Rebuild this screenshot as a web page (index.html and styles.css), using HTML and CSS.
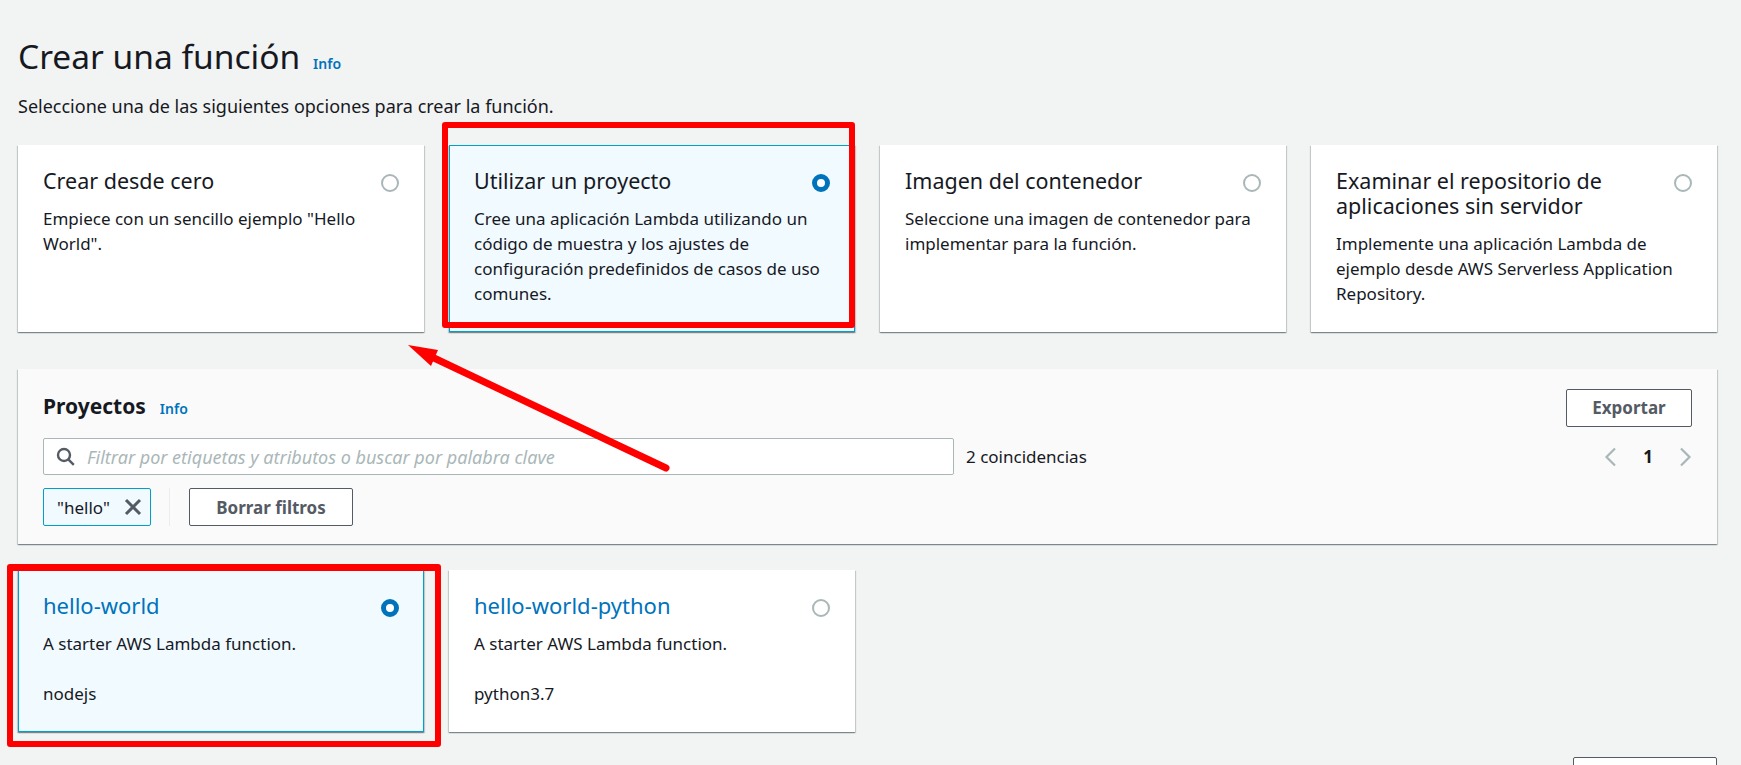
FILE: index.html
```html
<!DOCTYPE html>
<html lang="es">
<head>
    <meta charset="UTF-8">
    <title>Crear una función</title>
    <link rel="stylesheet" href="styles.css">
</head>
<body>
    <div class="pagina">
        <div class="migas">
            <span>Lambda</span><span>/</span><span>Funciones</span><span>/</span><span>Crear una función</span>
        </div>
        <div class="cabecera">
            <h1>Crear una función</h1>
            <a class="info" href="#">Info</a>
        </div>
        <p class="intro">Seleccione una de las siguientes opciones para crear la función.</p>

        <div class="opciones">
            <div class="tarjeta">
                <div class="tarjeta-tit"><h2>Crear desde cero</h2><span class="radio"></span></div>
                <p>Empiece con un sencillo ejemplo "Hello World".</p>
            </div>
            <div class="tarjeta activa">
                <div class="tarjeta-tit"><h2>Utilizar un proyecto</h2><span class="radio"></span></div>
                <p>Cree una aplicación Lambda utilizando un código de muestra y los ajustes de configuración predefinidos de casos de uso comunes.</p>
            </div>
            <div class="tarjeta">
                <div class="tarjeta-tit"><h2>Imagen del contenedor</h2><span class="radio"></span></div>
                <p>Seleccione una imagen de contenedor para implementar para la función.</p>
            </div>
            <div class="tarjeta">
                <div class="tarjeta-tit"><h2>Examinar el repositorio de aplicaciones sin servidor</h2><span class="radio"></span></div>
                <p>Implemente una aplicación Lambda de ejemplo desde AWS Serverless Application Repository.</p>
            </div>
        </div>

        <div class="panel">
            <div class="panel-tit">
                <h3>Proyectos</h3>
                <a class="info" href="#">Info</a>
                <button class="boton exportar" type="button">Exportar</button>
            </div>
            <div class="busqueda">
                <div class="campo">
                    <svg width="19" height="19" viewBox="0 0 19 19" fill="none" stroke="#545b64" stroke-width="2.4"><circle cx="8" cy="8" r="6"/><path d="M12.3 12.3L17.8 17.8"/></svg>
                    <span>Filtrar por etiquetas y atributos o buscar por palabra clave</span>
                </div>
                <span class="conteo">2 coincidencias</span>
                <div class="paginas">
                    <svg width="12" height="20" viewBox="0 0 12 20" fill="none" stroke="#aab7b8" stroke-width="2.2"><path d="M11 1.5L2.5 10L11 18.5"/></svg>
                    <b>1</b>
                    <svg width="12" height="20" viewBox="0 0 12 20" fill="none" stroke="#aab7b8" stroke-width="2.2"><path d="M1 1.5L9.5 10L1 18.5"/></svg>
                </div>
            </div>
            <div class="filtros">
                <div class="chip">
                    <span>"hello"</span>
                    <svg width="18" height="18" viewBox="0 0 18 18" fill="none" stroke="#545b64" stroke-width="3"><path d="M2 2L16 16M16 2L2 16"/></svg>
                </div>
                <span class="separador"></span>
                <button class="boton" type="button">Borrar filtros</button>
            </div>
        </div>

        <div class="proyectos">
            <div class="tarjeta baja activa">
                <div class="tarjeta-tit"><h2 class="enlace">hello-world</h2><span class="radio"></span></div>
                <p>A starter AWS Lambda function.</p>
                <p class="runtime">nodejs</p>
            </div>
            <div class="tarjeta baja">
                <div class="tarjeta-tit"><h2 class="enlace">hello-world-python</h2><span class="radio"></span></div>
                <p>A starter AWS Lambda function.</p>
                <p class="runtime">python3.7</p>
            </div>
        </div>

        <div class="pie"><button class="boton siguiente" type="button"></button></div>

        <!-- anotaciones en rojo -->
        <div class="marco marco-proyecto"></div>
        <div class="marco marco-hello"></div>
        <svg class="flecha" width="300" height="140" viewBox="0 0 300 140">
            <path d="M261 123L29 13" stroke="#ff0000" stroke-width="7" stroke-linecap="round" fill="none"/>
            <path d="M3 0L33 5L26 21Z" fill="#ff0000"/>
        </svg>
    </div>
</body>
</html>
```

FILE: styles.css
```css
* {
    box-sizing: border-box;
}
html, body {
    margin: 0;
    padding: 0;
    height: 765px;
    overflow: hidden;
}
body {
    background-color: #f2f3f3;
    color: #16191f;
    font-family: "Noto Sans", Arial, sans-serif;
    font-size: 17px;
}
.pagina {
    position: relative;
    height: 765px;
    overflow: hidden;
    padding: 0 24px 0 18px;
}
.migas {
    display: flex;
    gap: 19px;
    margin-top: -17px;
    height: 22px;
    line-height: 22px;
    color: #aab7b8;
}
.cabecera {
    display: flex;
    align-items: baseline;
    gap: 13px;
    margin-top: 26px;
    height: 50px;
}
h1 {
    margin: 0;
    font-size: 33.5px;
    font-weight: 400;
    line-height: 50px;
}
.info {
    color: #0073bb;
    font-size: 14px;
    font-weight: 600;
    text-decoration: none;
}
.intro {
    margin: 13px 0 0;
    font-size: 18px;
    line-height: 24px;
}
.opciones {
    display: grid;
    grid-template-columns: repeat(4, 1fr);
    gap: 25px;
    margin-top: 27px;
}
.tarjeta {
    background-color: #fff;
    height: 187px;
    padding: 23px 25px 0;
    box-shadow: 0 1px 1px 0 rgba(0, 28, 36, 0.3), 1px 1px 1px 0 rgba(0, 28, 36, 0.15), -1px 1px 1px 0 rgba(0, 28, 36, 0.15);
}
.tarjeta.activa {
    background-color: #f1faff;
    border: 1px solid #00a1c9;
    padding: 22px 24px 0;
}
.tarjeta.baja {
    height: 162px;
}
.tarjeta-tit {
    display: flex;
    justify-content: space-between;
    align-items: flex-start;
    gap: 20px;
}
h2 {
    margin: 0;
    font-size: 21.5px;
    font-weight: 400;
    line-height: 25px;
}
h2.enlace {
    color: #0073bb;
    font-size: 22px;
}
.radio {
    flex: none;
    width: 18px;
    height: 18px;
    margin-top: 6px;
    border: 2px solid #aab7b8;
    border-radius: 50%;
    background-color: #fff;
}
.activa .radio {
    border: 5px solid #0073bb;
}
.tarjeta p {
    margin: 0;
    padding-top: 13px;
    line-height: 25px;
}
.tarjeta p.runtime {
    padding-top: 25px;
}
.panel {
    margin-top: 37px;
    height: 175px;
    padding: 18px 25px 0;
    background-color: #fafafa;
    box-shadow: 0 1px 1px 0 rgba(0, 28, 36, 0.3), 1px 1px 1px 0 rgba(0, 28, 36, 0.15), -1px 1px 1px 0 rgba(0, 28, 36, 0.15);
}
.panel-tit {
    display: flex;
    align-items: baseline;
    gap: 14px;
    height: 38px;
}
h3 {
    margin: 0;
    font-size: 21px;
    font-weight: 700;
    line-height: 38px;
}
.boton {
    height: 38px;
    background-color: #fff;
    border: 1px solid #545b64;
    border-radius: 2px;
    color: #545b64;
    font-family: "Noto Sans", Arial, sans-serif;
    font-size: 17px;
    font-weight: 700;
    padding: 0;
    cursor: pointer;
}
.exportar {
    margin-left: auto;
    width: 126px;
}
.busqueda {
    display: flex;
    align-items: center;
    margin-top: 13px;
    height: 37px;
}
.campo {
    display: flex;
    align-items: center;
    gap: 12px;
    width: 911px;
    height: 37px;
    padding-left: 12px;
    background-color: #fff;
    border: 1px solid #aab7b8;
    border-radius: 2px;
    color: #aab7b8;
    font-size: 18px;
    font-style: italic;
}
.conteo {
    margin-left: 12px;
}
.paginas {
    display: flex;
    align-items: center;
    gap: 27px;
    margin-left: auto;
}
.paginas b {
    font-weight: 700;
}
.filtros {
    display: flex;
    align-items: center;
    margin-top: 13px;
    height: 38px;
}
.chip {
    display: flex;
    align-items: center;
    justify-content: space-between;
    width: 108px;
    height: 38px;
    padding: 0 8px 0 13px;
    background-color: #f1faff;
    border: 1px solid #00a1c9;
    border-radius: 2px;
}
.separador {
    width: 1px;
    height: 38px;
    margin: 0 19px 0 18px;
    background-color: #eaeded;
}
.filtros .boton {
    width: 164px;
}
.proyectos {
    display: grid;
    grid-template-columns: repeat(4, 1fr);
    gap: 25px;
    margin-top: 26px;
}
.pie {
    display: flex;
    justify-content: flex-end;
    margin-top: 25px;
}
.siguiente {
    width: 144px;
}
.marco {
    position: absolute;
    border: 6px solid #ff0000;
    border-radius: 3px;
}
.marco-proyecto {
    left: 442px;
    top: 122px;
    width: 413px;
    height: 206px;
}
.marco-hello {
    left: 7px;
    top: 564px;
    width: 434px;
    height: 183px;
    border-top-width: 7px;
}
.flecha {
    position: absolute;
    left: 405px;
    top: 345px;
}
```
